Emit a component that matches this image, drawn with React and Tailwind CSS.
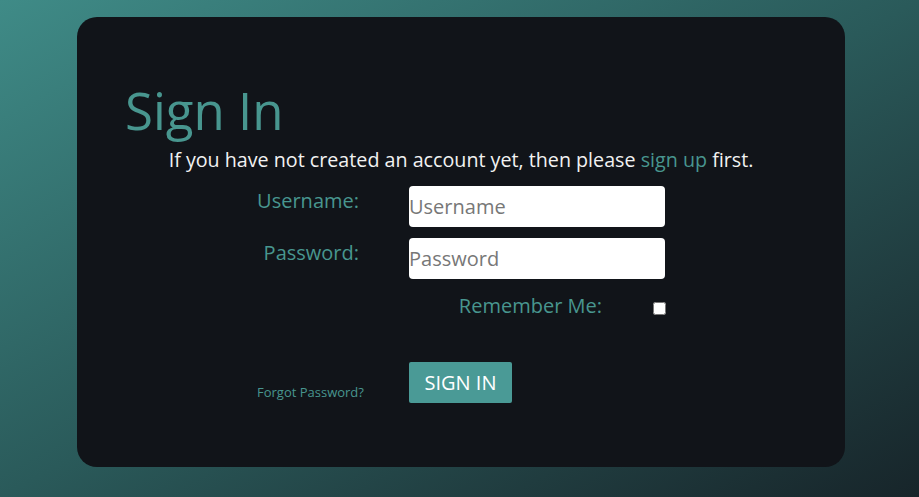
import React, { useState } from "react";

const SignIn = () => {
  const [remember, setRemember] = useState(false);

  return (
    <div
      className="min-h-screen w-full pt-[17px] bg-gradient-to-br from-[#3f8b87] via-[#2a5a5a] to-[#17252a]"
      style={{ fontFamily: "'Open Sans', sans-serif" }}
    >
      <div className="ml-[77px] w-[768px] h-[450px] rounded-[20px] bg-[#111419] pt-[67px]">
        <h1 className="pl-[48px] text-[51px] leading-[52px] text-[#48968f] font-normal">
          Sign In
        </h1>

        <p className="mt-[12px] text-center text-[19.7px] leading-[24px] text-[#f2f2f2]">
          If you have not created an account yet, then please{" "}
          <a href="#" className="text-[#48968f]">
            sign up
          </a>{" "}
          first.
        </p>

        <div className="mt-[14px] pl-[180px]">
          <div className="flex items-start">
            <label className="w-[102px] text-right text-[20px] whitespace-nowrap text-[#48968f]">
              Username:
            </label>
            <input
              type="text"
              placeholder="Username"
              className="ml-[50px] w-[256px] h-[41px] rounded-[4px] bg-white text-[20px] text-gray-800 placeholder:text-[#777] outline-none"
            />
          </div>

          <div className="mt-[11px] flex items-start">
            <label className="w-[102px] text-right text-[20px] whitespace-nowrap text-[#48968f]">
              Password:
            </label>
            <input
              type="password"
              placeholder="Password"
              className="ml-[50px] w-[256px] h-[41px] rounded-[4px] bg-white text-[20px] text-gray-800 placeholder:text-[#777] outline-none"
            />
          </div>

          <div className="mt-[12px] flex items-start">
            <label className="ml-[201px] w-[144px] text-right text-[20px] whitespace-nowrap text-[#48968f]">
              Remember Me:
            </label>
            <input
              type="checkbox"
              checked={remember}
              onChange={(e) => setRemember(e.target.checked)}
              className="ml-[51px] mt-[11px] w-[13px] h-[13px]"
            />
          </div>

          <div className="mt-[41px] flex items-end">
            <a href="#" className="w-[152px] pb-[1px] text-[13px] whitespace-nowrap text-[#48968f]">
              Forgot Password?
            </a>
            <button className="w-[103px] h-[41px] rounded-[2px] bg-[#4a9a96] text-[20px] text-white">
              SIGN IN
            </button>
          </div>
        </div>
      </div>
    </div>
  );
};

export default SignIn;
